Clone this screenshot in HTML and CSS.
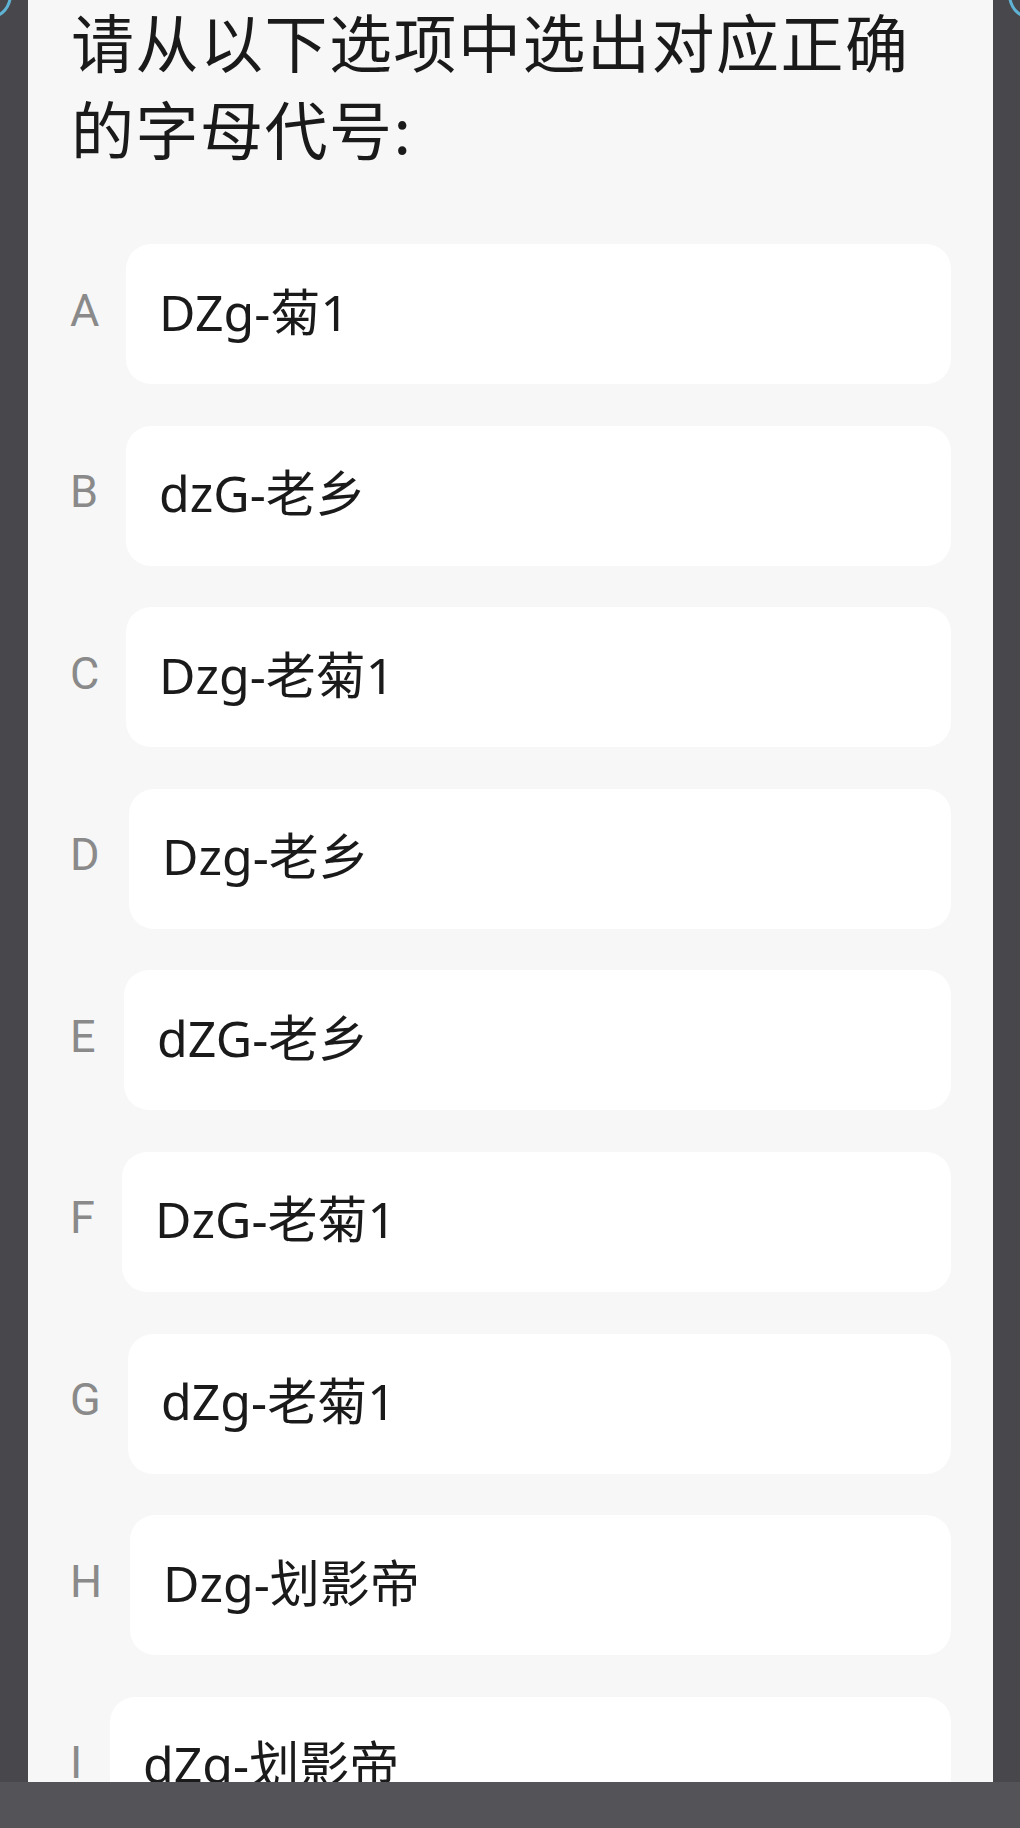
FILE: index.html
```html
<!DOCTYPE html>
<html lang="zh-CN">
<head>
  <meta charset="UTF-8">
  <meta name="viewport" content="width=device-width, initial-scale=1.0">
  <title>选择题</title>
  <link rel="stylesheet" href="styles.css">
</head>
<body>
  <div class="screen">
    <div class="corner corner-left"></div>
    <div class="corner corner-right"></div>

    <div class="sheet">
      <h1 class="question">请从以下选项中选出对应正确的字母代号:</h1>

      <div class="options">
        <div class="option"><span class="letter">A</span><div class="card">DZg-菊1</div></div>
        <div class="option"><span class="letter">B</span><div class="card">dzG-老乡</div></div>
        <div class="option"><span class="letter">C</span><div class="card">Dzg-老菊1</div></div>
        <div class="option"><span class="letter">D</span><div class="card">Dzg-老乡</div></div>
        <div class="option"><span class="letter">E</span><div class="card">dZG-老乡</div></div>
        <div class="option"><span class="letter">F</span><div class="card">DzG-老菊1</div></div>
        <div class="option"><span class="letter">G</span><div class="card">dZg-老菊1</div></div>
        <div class="option"><span class="letter">H</span><div class="card">Dzg-划影帝</div></div>
        <div class="option"><span class="letter">I</span><div class="card">dZg-划影帝</div></div>
      </div>
    </div>
  </div>

  <div class="nav-bar"></div>
</body>
</html>
```

FILE: styles.css
```css
body {
  margin: 0;
  background-color: #48474c;
  font-family: "Noto Sans", "Noto Sans CJK SC", sans-serif;
  color: #1a1a1a;
}

.screen {
  position: relative;
  height: 1782px;
  overflow: hidden;
  padding: 0 27px 0 28px;
}

/* edge of the wallpaper window peeking out behind the sheet */
.corner {
  position: absolute;
  top: -30px;
  width: 40px;
  height: 48px;
  border-radius: 50%;
  border: 3px solid #5fb4d6;
  box-sizing: border-box;
}

.corner-left {
  left: -28px;
}

.corner-right {
  right: -28px;
}

.sheet {
  position: relative;
  height: 100%;
  background-color: #f7f7f7;
  padding: 0 42px 0 43px;
  overflow: hidden;
}

.question {
  margin: -4px 0 0;
  font-family: "Noto Sans CJK SC", sans-serif;
  font-size: 63px;
  font-weight: 400;
  line-height: 87px;
  letter-spacing: 1.5px;
  color: #1a1a1a;
}

.options {
  display: flex;
  flex-direction: column;
  gap: 41.6px;
  margin-top: 74px;
}

.option {
  display: flex;
  align-items: center;
}

.letter {
  width: 55px;
  flex-shrink: 0;
  margin-left: -1px;
  padding-right: 1px;
  font-family: Roboto, "Noto Sans", sans-serif;
  font-size: 45px;
  line-height: 1;
  color: #8a8a8a;
  margin-top: -8px;
}

.card {
  flex: 1;
  height: 140px;
  box-sizing: border-box;
  display: flex;
  align-items: center;
  padding: 0 0 10px 33px;
  background-color: #fff;
  border-radius: 25px;
  font-size: 50px;
  color: #1a1a1a;
  white-space: nowrap;
}

/* cards are caught mid-slide, each a few pixels off */
.option:nth-child(4) .card { margin-left: 3px; }
.option:nth-child(5) .card { margin-left: -2px; }
.option:nth-child(6) .card { margin-left: -4px; }
.option:nth-child(7) .card { margin-left: 2px; }
.option:nth-child(8) .card { margin-left: 4px; }
.option:nth-child(9) .card { margin-left: -16px; }

.nav-bar {
  height: 46px;
  background-color: #545358;
}
```
